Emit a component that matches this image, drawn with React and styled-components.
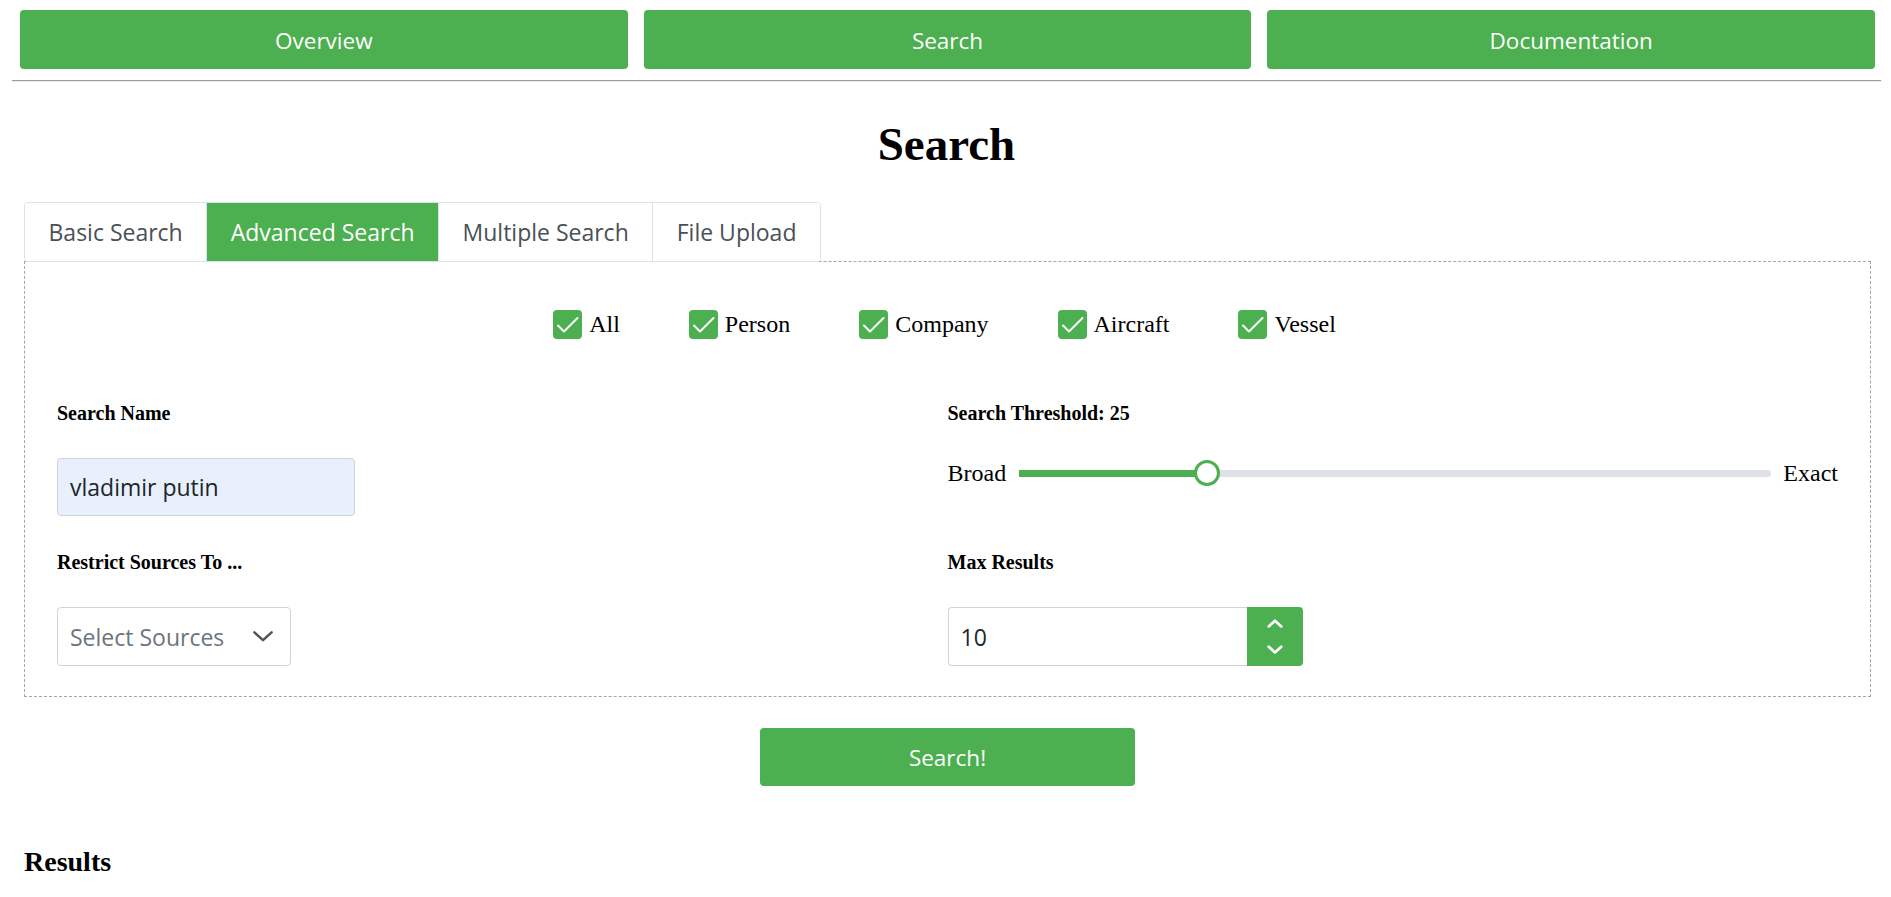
import React from "react";
import styled, { createGlobalStyle } from "styled-components";

const GREEN = "#4caf50";
const SANS = `"Open Sans", "Noto Sans", sans-serif`;
const SERIF = `"Liberation Serif", "Times New Roman", serif`;

const GlobalStyle = createGlobalStyle`
  html, body { background: #fff; }
  body {
    margin: 8px;
    font-family: ${SERIF};
    color: #000;
  }
  * { box-sizing: border-box; }
`;

const Page = styled.div`
  padding: 0 2px 0 4px;
`;

const Nav = styled.nav`
  display: flex;
  gap: 16px;
  padding: 2px 6px 0 8px;
`;

const NavButton = styled.button`
  flex: 1;
  height: 59px;
  padding-top: 2px;
  border: none;
  border-radius: 4px;
  background: ${GREEN};
  color: #fff;
  font-family: ${SANS};
  font-size: 22.5px;
  cursor: pointer;
`;

const Rule = styled.hr`
  margin: 11px 0 35px;
  height: 0;
  border: none;
  border-top: 1px solid #9a9a9a;
  border-bottom: 1px solid #eeeeee;
`;

const Title = styled.h1`
  margin: 0;
  text-align: center;
  font-family: ${SERIF};
  font-weight: bold;
  font-size: 47px;
  line-height: 55px;
`;

const Section = styled.section`
  margin: 30px 10px 0 12px;
`;

const TabList = styled.div`
  position: relative;
  z-index: 1;
  display: inline-flex;
  border: 1px solid #dee2e6;
  border-radius: 4px;
  overflow: hidden;
  background: #fff;
`;

const Tab = styled.button`
  height: 58px;
  padding: 0 23.5px;
  border: none;
  border-left: ${(p) => (p.$first ? "none" : "1px solid #dee2e6")};
  background: ${(p) => (p.$active ? GREEN : "#fff")};
  color: ${(p) => (p.$active ? "#fff" : "#495057")};
  font-family: ${SANS};
  font-size: 23px;
  cursor: pointer;
`;

const Panel = styled.div`
  margin-top: -1px;
  border: 1px dashed #a6a6a6;
  padding: 48px 32px 30px;
`;

const CheckRow = styled.div`
  display: flex;
  justify-content: center;
  gap: 69px;
  height: 29px;
  padding-right: 6px;
`;

const CheckItem = styled.label`
  display: flex;
  align-items: center;
  gap: 7px;
  font-family: ${SERIF};
  font-size: 24px;
  line-height: 29px;
  cursor: pointer;
`;

const Box = styled.span`
  width: 29px;
  height: 29px;
  border-radius: 4px;
  background: ${GREEN};
  display: flex;
  align-items: center;
  justify-content: center;
`;

const Grid = styled.div`
  display: grid;
  grid-template-columns: 1fr 1fr;
  row-gap: 35px;
  margin-top: 63px;
`;

const Field = styled.div`
  display: flex;
  flex-direction: column;
  align-items: flex-start;
`;

const Label = styled.div`
  font-family: ${SERIF};
  font-weight: bold;
  font-size: 20px;
  line-height: 23px;
  margin-bottom: 33px;
`;

const TextInput = styled.input`
  width: 298px;
  height: 58px;
  padding: 0 12px;
  border: 1px solid #ced4da;
  border-radius: 4px;
  background: #e8f0fe;
  color: #212529;
  font-family: ${SANS};
  font-size: 23px;
  outline: none;
`;

const SelectBox = styled.div`
  width: 234px;
  height: 59px;
  padding: 0 16px 0 12px;
  border: 1px solid #ced4da;
  border-radius: 4px;
  display: flex;
  align-items: center;
  justify-content: space-between;
  color: #6c757d;
  font-family: ${SANS};
  font-size: 23px;
`;

const SliderRow = styled.div`
  width: 100%;
  height: 30px;
  display: flex;
  align-items: center;
  gap: 13px;
  font-family: ${SERIF};
  font-size: 24px;
`;

const Track = styled.div`
  position: relative;
  flex: 1;
  height: 7px;
  border-radius: 4px;
  background: #dee2e6;
  margin-right: -1px;
`;

const Fill = styled.div`
  height: 100%;
  background: ${GREEN};
`;

const Thumb = styled.div`
  position: absolute;
  top: 50%;
  width: 26px;
  height: 26px;
  margin: -13px 0 0 -13px;
  border-radius: 50%;
  border: 3px solid ${GREEN};
  background: #fff;
`;

const NumberGroup = styled.div`
  display: flex;
  width: 355px;
  height: 59px;
`;

const NumberInput = styled.input`
  flex: 1;
  min-width: 0;
  height: 100%;
  padding: 0 12px;
  border: 1px solid #ced4da;
  border-right: none;
  border-radius: 4px 0 0 4px;
  color: #212529;
  font-family: ${SANS};
  font-size: 23px;
  outline: none;
`;

const Spinner = styled.div`
  width: 56px;
  height: 100%;
  background: ${GREEN};
  border-radius: 0 4px 4px 0;
  display: flex;
  flex-direction: column;
  align-items: center;
  justify-content: center;
  gap: 17px;
`;

const SubmitRow = styled.div`
  display: flex;
  justify-content: center;
  margin-top: 31px;
`;

const SubmitButton = styled.button`
  width: 375px;
  height: 58px;
  border: none;
  border-radius: 4px;
  background: ${GREEN};
  color: #fff;
  font-family: ${SANS};
  font-size: 22.5px;
  cursor: pointer;
`;

const ResultsTitle = styled.h2`
  margin: 60px 0 0;
  font-family: ${SERIF};
  font-weight: bold;
  font-size: 28px;
  line-height: 32px;
`;

const Check = () => (
  <svg width="29" height="29" viewBox="0 0 29 29">
    <polyline points="5,15.5 11,21.5 24.5,8" fill="none" stroke="#fff" strokeWidth="2" strokeLinecap="round" strokeLinejoin="round" />
  </svg>
);

const Chevron = ({ up, size = 16, color = "#fff", w = 2.4 }) => (
  <svg width={size} height={size * 0.57} viewBox="0 0 14 8">
    <polyline
      points={up ? "1.5,6.5 7,1.5 12.5,6.5" : "1.5,1.5 7,6.5 12.5,1.5"}
      fill="none"
      stroke={color}
      strokeWidth={w}
      strokeLinecap="round"
      strokeLinejoin="round"
    />
  </svg>
);

const categories = ["All", "Person", "Company", "Aircraft", "Vessel"];
const tabs = ["Basic Search", "Advanced Search", "Multiple Search", "File Upload"];

export default function App() {
  const threshold = 25;
  return (
    <Page>
      <GlobalStyle />
      <Nav>
        <NavButton>Overview</NavButton>
        <NavButton>Search</NavButton>
        <NavButton>Documentation</NavButton>
      </Nav>
      <Rule />
      <Title>Search</Title>
      <Section>
        <TabList>
          {tabs.map((t, i) => (
            <Tab key={t} $first={i === 0} $active={i === 1}>
              {t}
            </Tab>
          ))}
        </TabList>
        <Panel>
          <CheckRow>
            {categories.map((c) => (
              <CheckItem key={c}>
                <Box>
                  <Check />
                </Box>
                {c}
              </CheckItem>
            ))}
          </CheckRow>
          <Grid>
            <Field>
              <Label>Search Name</Label>
              <TextInput defaultValue="vladimir putin" />
            </Field>
            <Field>
              <Label>Search Threshold: {threshold}</Label>
              <SliderRow>
                <span>Broad</span>
                <Track>
                  <Fill style={{ width: `${threshold}%` }} />
                  <Thumb style={{ left: `${threshold}%` }} />
                </Track>
                <span>Exact</span>
              </SliderRow>
            </Field>
            <Field>
              <Label>Restrict Sources To ...</Label>
              <SelectBox>
                <span>Select Sources</span>
                <Chevron size={22} color="#555" w={1.6} />
              </SelectBox>
            </Field>
            <Field>
              <Label>Max Results</Label>
              <NumberGroup>
                <NumberInput defaultValue="10" />
                <Spinner>
                  <Chevron up />
                  <Chevron />
                </Spinner>
              </NumberGroup>
            </Field>
          </Grid>
        </Panel>
        <SubmitRow>
          <SubmitButton>Search!</SubmitButton>
        </SubmitRow>
        <ResultsTitle>Results</ResultsTitle>
      </Section>
    </Page>
  );
}
